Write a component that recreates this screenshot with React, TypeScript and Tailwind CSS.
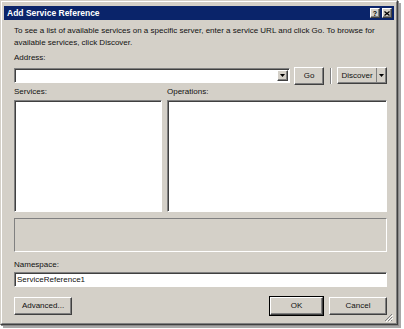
const raised =
  'border border-t-white border-l-white border-r-[#404040] border-b-[#404040] shadow-[inset_-1px_-1px_0_#808080] bg-[#d4d0c8]';
const sunken =
  'border border-t-[#808080] border-l-[#808080] border-r-white border-b-white shadow-[inset_1px_1px_0_#404040]';

function DownArrow() {
  return (
    <svg width="5" height="3" viewBox="0 0 5 3">
      <path d="M0 0h5L2.5 3z" fill="#000" />
    </svg>
  );
}

function Button({ label, className = '' }: { label: string; className?: string }) {
  return (
    <div className={`flex h-[18px] items-center justify-center ${raised} ${className}`}>
      {label}
    </div>
  );
}

export default function App() {
  return (
    <div
      className="h-[329px] w-[404px] overflow-hidden bg-white text-[8px] leading-[12px] text-[#111]"
      style={{ fontFamily: '"Liberation Sans", Arial, sans-serif' }}
    >
      <div className="flex h-[325px] w-[398px] flex-col border border-t-[#d4d0c8] border-l-[#d4d0c8] border-r-[#404040] border-b-[#404040] bg-[#d4d0c8] shadow-[1px_1px_0_#8a8a8a,3px_3px_0_#a8a8a8]">
        <div className="flex flex-1 flex-col border border-t-white border-l-white border-r-[#808080] border-b-[#808080] px-[2px] pt-[4px]">
          {/* Title bar */}
          <div className="flex h-[14px] items-center justify-between bg-[#0a246a] pl-[3px] pr-[2px]">
            <span className="text-[8.5px] font-bold text-white">Add Service Reference</span>
            <div className="flex gap-[2px]">
              <div className={`flex h-[10px] w-[10px] items-center justify-center text-[7px] font-bold leading-none text-black ${raised}`}>
                ?
              </div>
              <div className={`flex h-[10px] w-[10px] items-center justify-center ${raised}`}>
                <svg width="6" height="5" viewBox="0 0 6 5">
                  <path d="M0.5 0.5L5.5 4.5M5.5 0.5L0.5 4.5" stroke="#000" strokeWidth="1.3" />
                </svg>
              </div>
            </div>
          </div>

          {/* Body */}
          <div className="relative flex flex-1 flex-col pl-[10px] pr-[7px] pt-[5px]">
            <p>
              To see a list of available services on a specific server, enter a service URL and click Go. To browse for
              <br />
              available services, click Discover.
            </p>

            <div className="mt-[3px]">Address:</div>
            <div className="mt-[3px] flex h-[17px] items-center">
              <div className={`flex h-[15px] w-[276px] items-center justify-end bg-white pr-[1px] ${sunken}`}>
                <div className={`flex h-[11px] w-[11px] items-center justify-center ${raised}`}>
                  <DownArrow />
                </div>
              </div>
              <Button label="Go" className="ml-[4px] h-[17px] w-[30px]" />
              <div className="ml-[6px] mr-[5px] h-[16px] w-[2px] border-l border-l-[#808080] border-r border-r-white" />
              <div className={`flex h-[17px] flex-1 items-center ${raised}`}>
                <span className="flex-1 text-center">Discover</span>
                <div className="flex h-full w-[10px] items-center justify-center border-l border-l-[#808080]">
                  <DownArrow />
                </div>
              </div>
            </div>

            <div className="mt-[2px] flex gap-[5px]">
              <div className="flex w-[148px] flex-col">
                <span>Services:</span>
                <div className={`mt-[2px] h-[112px] bg-white ${sunken}`} />
              </div>
              <div className="flex flex-1 flex-col">
                <span>Operations:</span>
                <div className={`mt-[2px] h-[112px] bg-white ${sunken}`} />
              </div>
            </div>

            <div className="mt-[6px] h-[34px] border border-t-[#808080] border-l-[#808080] border-r-white border-b-white bg-[#d4d0c8]" />

            <div className="mt-[7px]">Namespace:</div>
            <div className={`mt-[1px] flex h-[15px] items-center bg-white pl-[2px] ${sunken}`}>ServiceReference1</div>

            <div className="mt-[9px] flex items-center">
              <Button label="Advanced..." className="w-[58px]" />
              <div className="flex-1" />
              <div className="border border-black">
                <Button label="OK" className="h-[16px] w-[53px]" />
              </div>
              <Button label="Cancel" className="ml-[5px] w-[58px]" />
            </div>

            {/* Resize grip */}
            <svg className="absolute bottom-[1px] right-[1px]" width="9" height="9" viewBox="0 0 9 9">
              <path d="M8 1L1 8M8 4L4 8M8 7L7 8" stroke="#808080" strokeWidth="1" />
              <path d="M9 2L2 9M9 5L5 9" stroke="#ffffff" strokeWidth="1" />
            </svg>
          </div>
        </div>
      </div>
    </div>
  );
}
